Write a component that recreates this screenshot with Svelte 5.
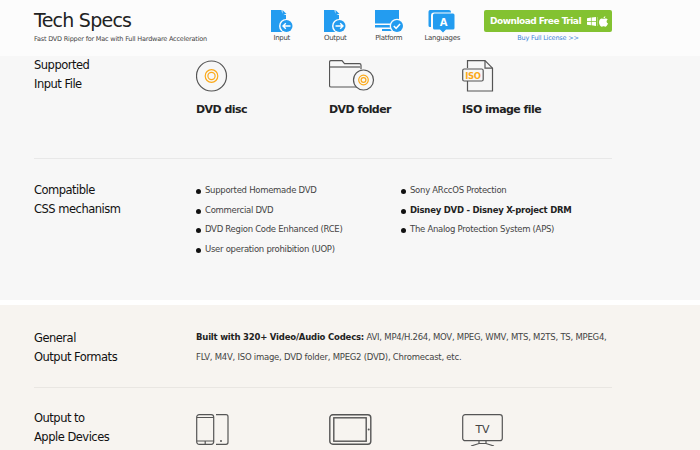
<script>
  const nav = [
    { label: 'Input', kind: 'in' },
    { label: 'Output', kind: 'out' },
    { label: 'Platform', kind: 'plat' },
    { label: 'Languages', kind: 'lang' }
  ];
  const left = ['Supported Homemade DVD', 'Commercial DVD', 'DVD Region Code Enhanced (RCE)', 'User operation prohibition (UOP)'];
</script>

<div class="page">
  <header class="head">
    <div class="wrap headrow">
      <div class="brand">
        <h1>Tech Specs</h1>
        <p>Fast DVD Ripper for Mac with Full Hardware Acceleration</p>
      </div>
      <nav class="nav">
        {#each nav as n}
          <div class="navitem">
            <svg width="30" height="23" viewBox="0 0 30 23">
              {#if n.kind === 'in' || n.kind === 'out'}
                <path d="M4 0h10.500c0 2.800 2 4.800 4.500 5v17H4z" fill="#239cf0"/>
                <path d="M15.500 0l4 4h-4z" fill="#239cf0"/>
                <circle cx="19" cy="16" r="7" fill="#fcfcfc"/>
                <circle cx="19.500" cy="16" r="6" fill="#239cf0"/>
                {#if n.kind === 'in'}
                  <path d="M23.500 16h-7.500M18.800 13.200L16 16l2.800 2.800" fill="none" stroke="#fff" stroke-width="1.400"/>
                {:else}
                  <path d="M15.500 16H23M20.200 13.200L23 16l-2.800 2.800" fill="none" stroke="#fff" stroke-width="1.400"/>
                {/if}
              {:else if n.kind === 'plat'}
                <path d="M1 0h24v13.500H1zM1 15h24v2.500H1zM8 19h12v2H8z" fill="#239cf0"/>
                <circle cx="23" cy="16" r="7.300" fill="#fcfcfc"/>
                <circle cx="23" cy="16" r="6" fill="#239cf0"/>
                <path d="M19.800 16l2.300 2.300 4-4.300" fill="none" stroke="#fff" stroke-width="1.500"/>
              {:else}
                <path d="M4 0h18a2 2 0 0 1 2 2v.500H7a3 3 0 0 0-3 3v11.500H3a1.500 1.500 0 0 1-1.500-1.500V2A2 2 0 0 1 4 0z" fill="#239cf0"/>
                <path d="M7.500 3.500H26a1.500 1.500 0 0 1 1.500 1.500v13a1.500 1.500 0 0 1-1.500 1.500h-7l-3 3-3-3H7.500A1.500 1.500 0 0 1 6 18V5a1.500 1.500 0 0 1 1.500-1.500z" fill="#239cf0"/>
                <text x="16.500" y="15.500" text-anchor="middle" class="a">A</text>
              {/if}
            </svg>
            <span>{n.label}</span>
          </div>
        {/each}
      </nav>
      <div class="cta">
        <div class="btn">
          <b>Download Free Trial</b>
          <svg width="9" height="9" viewBox="0 0 11 11"><path d="M0 1.500l4.800-.8v4.300H0zM5.600.6L11 0v5H5.600zM0 5.800h4.800v4.400L0 9.500zM5.600 5.800H11V11l-5.400-.8z" fill="#fff"/></svg>
          <i></i>
          <svg width="9" height="11" viewBox="0 0 11 13"><path d="M7.800 0c.1 1.400-1 2.700-2.400 2.700C5.300 1.400 6.500.1 7.800 0zM5.500 3.400c.6 0 1.400-.7 2.600-.7.8 0 1.900.4 2.500 1.300-2 1.300-1.700 4 .4 4.900C10.400 10.300 9.300 12.800 8 12.800c-1 0-1.300-.6-2.400-.6s-1.500.6-2.400.6C1.700 12.800 0 9.800 0 7.400 0 4.500 1.800 2.800 3.400 2.800c1 0 1.600.6 2.100.6z" fill="#fff"/></svg>
        </div>
        <span class="buy">Buy Full License &gt;&gt;</span>
      </div>
    </div>
  </header>

  <section class="grey">
    <div class="wrap row first">
      <h2>Supported<br />Input File</h2>
      <div class="items">
        <div class="item">
          <svg width="46" height="33" viewBox="0 0 46 33" class="ic">
            <circle cx="15.500" cy="16" r="15" fill="none" stroke="#555" stroke-width="1.200"/>
            <circle cx="15.500" cy="16" r="6.300" fill="none" stroke="#fba919" stroke-width="1.200"/>
            <circle cx="15.500" cy="16" r="3.600" fill="none" stroke="#fba919" stroke-width="1.200"/>
          </svg>
          <strong>DVD disc</strong>
        </div>
        <div class="item">
          <svg width="46" height="33" viewBox="0 0 46 33" class="ic">
            <path d="M31 27H2a1.500 1.500 0 0 1-1.500-1.500V2A1.500 1.500 0 0 1 2 .7h11l2.500 3h15A1.500 1.500 0 0 1 32 5.200v4" fill="none" stroke="#555" stroke-width="1.200"/>
            <path d="M1 7h30" fill="none" stroke="#555" stroke-width="1.200"/>
            <circle cx="34.500" cy="20" r="10" fill="#f7f7f7" stroke="#555" stroke-width="1.200"/>
            <circle cx="34.500" cy="20" r="4.800" fill="none" stroke="#fba919" stroke-width="1.200"/>
            <circle cx="34.500" cy="20" r="2.400" fill="none" stroke="#fba919" stroke-width="1.200"/>
          </svg>
          <strong>DVD folder</strong>
        </div>
        <div class="item">
          <svg width="46" height="33" viewBox="0 0 46 33" class="ic">
            <path d="M5.500 8V.7H23l7.500 7.500v22.800H5.500V21" fill="none" stroke="#555" stroke-width="1.200"/>
            <path d="M23 .7v7.500h7.500" fill="none" stroke="#555" stroke-width="1.200"/>
            <rect x=".7" y="9" width="20.500" height="12" rx="1.500" fill="#f7f7f7" stroke="#555" stroke-width="1.200"/>
            <text x="11" y="18.700" text-anchor="middle" class="iso">ISO</text>
          </svg>
          <strong>ISO image file</strong>
        </div>
      </div>
    </div>
    <div class="wrap line"></div>
    <div class="wrap row second">
      <h2>Compatible<br />CSS mechanism</h2>
      <div class="lists">
        <ul>
          {#each left as t}<li>{t}</li>{/each}
        </ul>
        <ul>
          <li>Sony ARccOS Protection</li>
          <li><b>Disney DVD - Disney X-project DRM</b></li>
          <li>The Analog Protection System (APS)</li>
        </ul>
      </div>
    </div>
  </section>

  <section class="warm">
    <div class="wrap row third">
      <h2>General<br />Output Formats</h2>
      <p class="formats"><b>Built with 320+ Video/Audio Codecs:</b> AVI, MP4/H.264, MOV, MPEG, WMV, MTS, M2TS, TS, MPEG4, FLV, M4V, ISO image, DVD folder, MPEG2 (DVD), Chromecast, etc.</p>
    </div>
    <div class="wrap line warmline"></div>
    <div class="wrap row fourth">
      <h2>Output to<br />Apple Devices</h2>
      <div class="items low">
        <div class="item">
          <svg width="33" height="31" viewBox="0 0 33 31" class="ic">
            <rect x=".7" y=".7" width="17" height="29.600" rx="2.500" fill="none" stroke="#555" stroke-width="1.200"/>
            <path d="M1 3.500h17M1 27h17M9.200 27v3" fill="none" stroke="#555" stroke-width="1.200"/>
            <path d="M20 .7h10a2 2 0 0 1 2 2v25.600a2 2 0 0 1-2 2H20" fill="none" stroke="#555" stroke-width="1.200"/>
            <circle cx="25" cy="27" r="1" fill="#555"/>
          </svg>
        </div>
        <div class="item">
          <svg width="43" height="31" viewBox="0 0 43 31" class="ic">
            <rect x=".8" y=".8" width="41" height="29.400" rx="3" fill="none" stroke="#555" stroke-width="1.400"/>
            <rect x="4.800" y="3.800" width="32.400" height="23.400" fill="none" stroke="#555" stroke-width="1.400"/>
            <circle cx="39.700" cy="15.500" r="1" fill="#555"/>
          </svg>
        </div>
        <div class="item">
          <svg width="41" height="32" viewBox="0 0 41 32" class="ic">
            <rect x=".7" y=".7" width="39.600" height="26" rx="2.500" fill="none" stroke="#555" stroke-width="1.200"/>
            <path d="M17 27v2.500M24 27v2.500M9 32l8-2.500h7l8 2.500" fill="none" stroke="#555" stroke-width="1.200"/>
            <text x="20.500" y="18.500" text-anchor="middle" class="tv">TV</text>
          </svg>
        </div>
      </div>
    </div>
  </section>
</div>

<style>
  :global(body) { margin: 0; background: #fff; }
  .page { width: 700px; height: 450px; overflow: hidden; font-family: "DejaVu Sans", "Noto Sans", sans-serif; color: #111; }
  .wrap { width: 578px; margin-left: 34px; }
  .head { height: 56px; background: #fcfcfc; }
  .headrow { display: flex; }
  .brand { width: 221px; flex: none; padding-top: 9px; }
  h1 { margin: 0; font-size: 19px; letter-spacing: -0.75px; line-height: 22px; font-weight: 400; color: #222; }
  .brand p { margin: 3px 0 0; font-size: 6.500px; letter-spacing: -0.2px; line-height: 10px; color: #444; white-space: nowrap; }
  .nav { display: flex; width: 214px; flex: none; padding-top: 10px; }
  .navitem { width: 53.500px; display: flex; flex-direction: column; align-items: center; }
  .navitem span { font-size: 7px; letter-spacing: -0.3px; line-height: 10px; color: #444; }
  .a { font: 700 10px "DejaVu Sans", sans-serif; fill: #fff; }
  .iso { font: 700 8.500px "DejaVu Sans", sans-serif; letter-spacing: -0.3px; fill: #fba919; }
  .tv { font: 400 11px "DejaVu Sans", sans-serif; fill: #444; }
  .cta { margin-left: auto; width: 128px; flex: none; padding-top: 10px; display: flex; flex-direction: column; align-items: center; }
  .btn { width: 128px; height: 22px; background: #83c231; border-radius: 2px; display: flex; align-items: center; gap: 1px; padding-left: 6px; box-sizing: border-box; color: #fff; }
  .btn b { font-size: 9px; margin-right: 5px; white-space: nowrap; letter-spacing: -0.5px; }
  .btn svg { flex: none; }
  .btn i { width: 1px; height: 9px; flex: none; background: #a6d66c; }
  .buy { font-size: 6.500px; letter-spacing: -0.2px; line-height: 10px; margin-top: 1px; color: #3a82d6; }
  .grey { background: #f7f7f7; height: 244px; }
  .row { display: flex; }
  h2 { margin: 0; width: 162px; flex: none; font-size: 11.500px; letter-spacing: -0.5px; line-height: 19px; font-weight: 400; color: #111; }
  .first { height: 102px; }
  .items { display: flex; padding-top: 4px; }
  .item { width: 133px; display: flex; flex-direction: column; }
  .ic { display: block; }
  .item strong { font-size: 11px; letter-spacing: -0.55px; line-height: 14px; margin-top: 10px; color: #222; }
  .line { height: 1px; background: #e8e8e8; }
  .second { padding-top: 22px; }
  .lists { display: flex; }
  .lists ul { list-style: none; margin: 0; padding: 0; width: 205px; }
  .lists li { font-size: 8.500px; letter-spacing: -0.28px; line-height: 19.700px; color: #444; position: relative; padding-left: 9px; white-space: nowrap; }
  .lists li::before { content: ""; position: absolute; left: 0; top: 8px; width: 5px; height: 5px; border-radius: 50%; background: #111; }
  .lists li b { color: #222; letter-spacing: -0.23px; }
  .warm { margin-top: 5px; background: #f7f4f0; height: 145px; }
  .third { padding-top: 24px; height: 58px; }
  .formats { margin: -1px 0 0; font-size: 8.500px; letter-spacing: -0.24px; line-height: 19.500px; color: #444; width: 418px; }
  .formats b { color: #222; letter-spacing: -0.2px; }
  .warmline { background: #e9e6e2; }
  .fourth { padding-top: 21px; }
  .low { padding-top: 5px; }
</style>
